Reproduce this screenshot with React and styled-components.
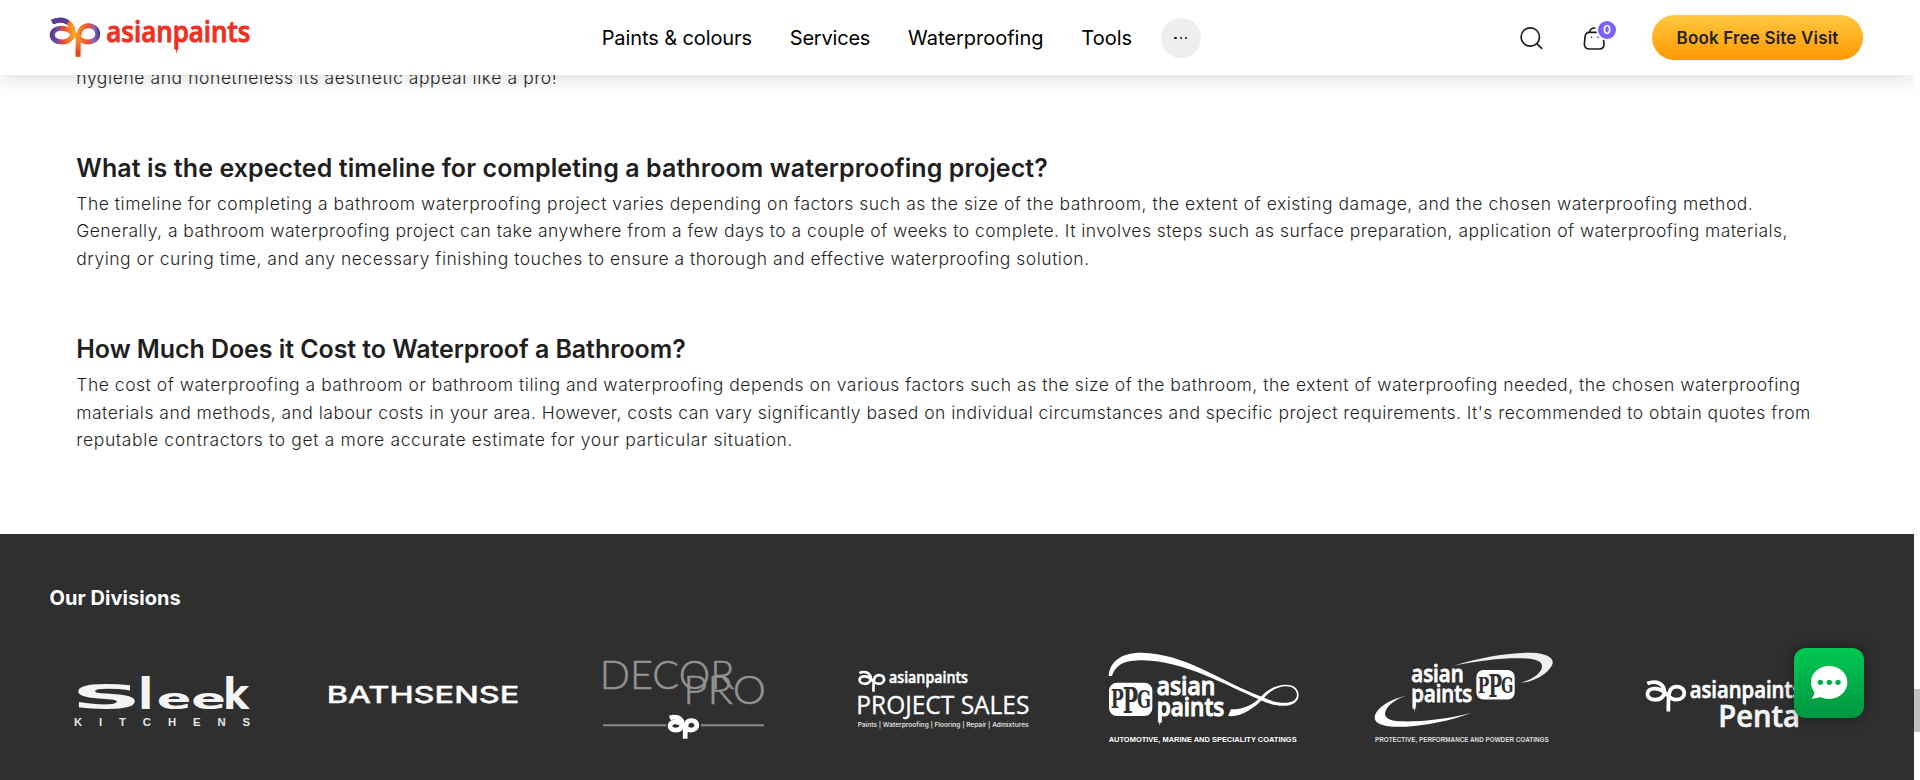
import React from "react";
import styled, { createGlobalStyle } from "styled-components";

const GlobalStyle = createGlobalStyle`
  * { box-sizing: border-box; }
  html, body { margin: 0; padding: 0; overflow: hidden; }
  body {
    background: #fff;
    color: #1f1f1f;
    font-family: Inter, "Liberation Sans", sans-serif;
  }
`;

const Page = styled.div`
  display: flex;
  width: 1920px;
  height: 780px;
  overflow: hidden;
`;

const Content = styled.div`
  display: flex;
  flex-direction: column;
  width: 1914px;
  height: 780px;
  overflow: hidden;
`;

const ScrollTrack = styled.div`
  width: 6px;
  padding-top: 689px;
  background: #fffefa;
`;

const ScrollThumb = styled.div`
  height: 43px;
  background: #c1c1c1;
`;

const Header = styled.header`
  position: relative;
  z-index: 2;
  display: flex;
  flex: none;
  align-items: center;
  height: 75px;
  padding: 0 51px 0 50px;
  background: #fff;
  box-shadow: 0 4px 20px rgba(0, 0, 0, 0.13);
`;

const LogoLink = styled.a`
  display: block;
  height: 75px;
`;

const BrandSvg = styled.svg`
  display: block;
  overflow: visible;
`;

const Nav = styled.nav`
  display: flex;
  align-items: center;
  gap: 37.8px;
  margin-left: 346.7px;
`;

const NavItem = styled.a`
  color: #000;
  font-size: 20px;
  line-height: 28px;
  letter-spacing: ${(p) => p.$tracking || 0}px;
  white-space: nowrap;
`;

const MoreButton = styled.button`
  display: flex;
  align-items: center;
  justify-content: center;
  gap: 3px;
  width: 40px;
  height: 40px;
  margin: 1px 0 0 -9px;
  padding: 0;
  border: 0;
  border-radius: 50%;
  background: #eee;
`;

const Dot = styled.span`
  width: 2.4px;
  height: 2.4px;
  border-radius: 50%;
  background: #111;
`;

const Actions = styled.div`
  display: flex;
  align-items: center;
  margin-left: auto;
`;

const IconButton = styled.button`
  position: relative;
  display: block;
  width: 26px;
  height: 26px;
  margin-right: ${(p) => p.$gap}px;
  margin-top: 2px;
  padding: 0;
  border: 0;
  background: none;
`;

const Badge = styled.span`
  position: absolute;
  top: -5px;
  right: -8px;
  width: 18px;
  height: 18px;
  border-radius: 50%;
  background: #7b61ff;
  color: #fff;
  font: 600 12px/18px Inter, sans-serif;
  text-align: center;
`;

const BookButton = styled.button`
  width: 211px;
  height: 45px;
  padding: 0;
  border: 0;
  border-radius: 23px;
  background: linear-gradient(180deg, #ffc840 0%, #ff9800 100%);
  color: #232323;
  font: 600 17px/24px Inter, sans-serif;
  letter-spacing: 0.17px;
`;

const Article = styled.main`
  display: flex;
  flex: none;
  flex-direction: column;
  gap: 59.3px;
  height: 470.5px;
  margin-top: -11.5px;
  padding-left: 76.3px;
`;

const Section = styled.section`
  display: flex;
  flex-direction: column;
  gap: 4px;
`;

const Question = styled.h2`
  margin: 0;
  padding-top: 0.5px;
  font-size: 25px;
  font-weight: 600;
  line-height: 35px;
  letter-spacing: ${(p) => p.$tracking}px;
`;

const Answer = styled.p`
  margin: 0;
`;

const Line = styled.span`
  display: block;
  font-size: 17.5px;
  font-weight: 300;
  line-height: 27.5px;
  letter-spacing: ${(p) => p.$tracking}px;
  white-space: nowrap;
`;

const Footer = styled.footer`
  flex: 1;
  padding-top: 51.5px;
  background: #2f2f2f;
`;

const FooterTitle = styled.h3`
  margin: 0 0 30.5px 49.5px;
  color: #fff;
  font-size: 20px;
  font-weight: 700;
  line-height: 24px;
  letter-spacing: 0.06px;
`;

const Divisions = styled.div`
  display: grid;
  grid-template-columns: repeat(7, 260.3px);
  justify-items: center;
  padding-left: 31.85px;
`;

const DivisionLogo = styled.svg`
  display: block;
  width: 240px;
  height: 120px;
  overflow: visible;
`;

const ChatButton = styled.button`
  position: fixed;
  z-index: 3;
  left: 1794px;
  top: 648px;
  display: block;
  width: 70px;
  height: 70px;
  padding: 0;
  border: 0;
  border-radius: 12px;
  background: linear-gradient(180deg, #00c853 0%, #00963f 100%);
  box-shadow: 0 0 14px rgba(0, 0, 0, 0.4);
`;

const sections = [
  {
    question: "What is the expected timeline for completing a bathroom waterproofing project?",
    tracking: 0.08,
    lines: [
      ["The timeline for completing a bathroom waterproofing project varies depending on factors such as the size of the bathroom, the extent of existing damage, and the chosen waterproofing method.", 0.52],
      ["Generally, a bathroom waterproofing project can take anywhere from a few days to a couple of weeks to complete. It involves steps such as surface preparation, application of waterproofing materials,", 0.458],
      ["drying or curing time, and any necessary finishing touches to ensure a thorough and effective waterproofing solution.", 0.51],
    ],
  },
  {
    question: "How Much Does it Cost to Waterproof a Bathroom?",
    tracking: -0.07,
    lines: [
      ["The cost of waterproofing a bathroom or bathroom tiling and waterproofing depends on various factors such as the size of the bathroom, the extent of waterproofing needed, the chosen waterproofing", 0.515],
      ["materials and methods, and labour costs in your area. However, costs can vary significantly based on individual circumstances and specific project requirements. It's recommended to obtain quotes from", 0.47],
      ["reputable contractors to get a more accurate estimate for your particular situation.", 0.64],
    ],
  },
];

function Ribbon({ x, y, scale, stroke, width = 13 }) {
  return (
    <g
      transform={`translate(${x} ${y}) scale(${scale})`}
      fill="none"
      stroke={stroke}
      strokeWidth={width}
    >
      <path d="M6 13C28 3 56 6 67 30C76 56 58 73 37 73C14 73 5 60 7 49C11 29 44 26 66 43" />
      <path d="M66 43C82 54 90 73 113 73C134 73 144 60 143 47C141 27 118 20 101 28C86 35 84 55 84 117" />
    </g>
  );
}

function Words({ x, y, w, size, weight = 600, family = "Open Sans", fill = "#fff", outline = 0, children }) {
  return (
    <text
      x={x}
      y={y}
      textLength={w}
      lengthAdjust="spacingAndGlyphs"
      fontFamily={`"${family}", sans-serif`}
      fontSize={size}
      fontWeight={weight}
      fill={fill}
      stroke={fill}
      strokeWidth={outline}
    >
      {children}
    </text>
  );
}

function HeaderLogo() {
  return (
    <BrandSvg width="205" height="75" viewBox="60 0 615 225">
      <defs>
        <linearGradient id="ribbon" gradientUnits="userSpaceOnUse" x1="0" y1="0" x2="150" y2="0">
          <stop offset="0" stopColor="#56388f" />
          <stop offset="0.16" stopColor="#7d4c9a" />
          <stop offset="0.27" stopColor="#ee4b2b" />
          <stop offset="0.48" stopColor="#f9a52a" />
          <stop offset="0.62" stopColor="#f37b2a" />
          <stop offset="0.78" stopColor="#ee4b3b" />
          <stop offset="0.88" stopColor="#8c6bb5" />
          <stop offset="1" stopColor="#4b2f8a" />
        </linearGradient>
        <linearGradient id="stem" gradientUnits="userSpaceOnUse" x1="0" y1="100" x2="0" y2="170">
          <stop offset="0" stopColor="#f9a52a" stopOpacity="0" />
          <stop offset="0.8" stopColor="#ee4023" />
        </linearGradient>
      </defs>
      <Ribbon x={60} y={53} scale={1} stroke="url(#ribbon)" width={15} />
      <path d="M67 66C84 58 102 58 114 68" fill="none" stroke="#5b3c94" strokeWidth="15" />
      <rect x="137" y="100" width="14" height="70" fill="url(#stem)" />
      <Words x={229} y={125} w={432} size={88} outline={3} fill="#ee3124">asianpaints</Words>
      <path d="M433 122H445L440 163Z" fill="#ee3124" />
    </BrandSvg>
  );
}

function PpgBadge({ x, y, scale }) {
  return (
    <g transform={`translate(${x} ${y}) scale(${scale})`}>
      <rect width="130" height="100" rx="24" fill="#fff" />
      <text y="76" fontFamily='"DejaVu Serif", serif' fontWeight="700" fill="#2f2f2f">
        <tspan x="5" y="77" fontSize="76" textLength="39" lengthAdjust="spacingAndGlyphs">P</tspan>
        <tspan x="41" y="90" fontSize="108" textLength="46" lengthAdjust="spacingAndGlyphs">P</tspan>
        <tspan x="84" y="77" fontSize="74" textLength="42" lengthAdjust="spacingAndGlyphs">G</tspan>
      </text>
    </g>
  );
}

function Sleek() {
  return (
    <DivisionLogo viewBox="6 210 720 360">
      <text y="416" fill="#f4f4f4" fontFamily='"DejaVu Sans", sans-serif' fontWeight="700">
        <tspan x="94" fontSize="100" textLength="212" lengthAdjust="spacingAndGlyphs">S</tspan>
        <tspan x="294" fontSize="130" textLength="46" lengthAdjust="spacingAndGlyphs">l</tspan>
        <tspan x="350" fontSize="86" textLength="208" lengthAdjust="spacingAndGlyphs">ee</tspan>
        <tspan x="549" fontSize="130" textLength="78" lengthAdjust="spacingAndGlyphs">k</tspan>
      </text>
      <text x="102" y="468" fontFamily='"Liberation Sans", sans-serif' fontWeight="700" fontSize="34" textLength="528" fill="#e6e6e6">
        KITCHENS
      </text>
    </DivisionLogo>
  );
}

function Bathsense() {
  return (
    <DivisionLogo viewBox="787 210 720 360">
      <Words x={861} y={398} w={578} size={69} weight={500} family="Inter" outline={1}>BATHSENSE</Words>
    </DivisionLogo>
  );
}

function DecorPro() {
  return (
    <DivisionLogo viewBox="-52 30 720 360">
      <Words x={58} y={176} w={404} size={118} weight={300} family="Lato" fill="#939393" outline={1.5}>DECOR</Words>
      <Words x={309} y={221} w={248} size={118} weight={300} family="Lato" fill="#939393" outline={1.5}>PRO</Words>
      <path d="M68 286H258M362 286H551" stroke="#8a8a8a" strokeWidth="6" />
      <Ribbon x={265} y={257} scale={0.59} stroke="#fff" width={24} />
    </DivisionLogo>
  );
}

function ProjectSales() {
  return (
    <DivisionLogo viewBox="729 30 720 360">
      <Ribbon x={835} y={122} scale={0.54} stroke="#fff" width={15} />
      <Words x={927} y={158} w={237} size={47} outline={1.5}>asianpaints</Words>
      <path d="M1039 156H1046L1043 178Z" fill="#fff" />
      <Words x={829} y={252} w={519} size={77} weight={400} outline={1}>PROJECT SALES</Words>
      <Words x={833} y={292} w={513} size={19} weight={600} family="Inter" fill="#ddd">
        Paints | Waterproofing | Flooring | Repair | Admixtures
      </Words>
    </DivisionLogo>
  );
}

function Automotive() {
  return (
    <DivisionLogo viewBox="-20 30 720 360">
      <path
        d="M57 138C60 98 90 68 155 68C285 70 385 150 520 202C570 226 620 224 622 195C621 160 562 158 525 202C490 238 455 262 415 258L424 238C466 238 492 222 514 200C545 160 624 148 627 194C627 234 566 236 512 210C405 164 285 94 160 91C105 91 80 102 67 138Z"
        fill="#fff"
      />
      <PpgBadge x={58} y={158} scale={1} />
      <Words x={201} y={195} w={176} size={77} outline={3}>asian</Words>
      <Words x={201} y={257} w={203} size={77} outline={3}>paints</Words>
      <path d="M206 255H217L210 287Z" fill="#fff" />
      <Words x={57} y={335} w={564} size={19} weight={700} family="Liberation Sans">
        AUTOMOTIVE, MARINE AND SPECIALITY COATINGS
      </Words>
    </DivisionLogo>
  );
}

function Protective() {
  return (
    <DivisionLogo viewBox="-20 30 720 360">
      <path
        d="M312 107C390 82 480 68 545 68C605 70 622 92 600 116C582 138 550 155 512 159C560 144 586 119 574 99C556 77 440 80 312 107Z"
        fill="#eee"
      />
      <path
        d="M168 198C112 210 75 240 75 264C78 290 130 292 170 290C230 287 310 270 364 249C290 268 210 276 152 274C104 271 98 254 115 230C125 218 145 205 168 198Z"
        fill="#fff"
      />
      <Words x={185} y={157} w={157} size={71} outline={2.5}>asian</Words>
      <Words x={185} y={217} w={182} size={71} outline={2.5}>paints</Words>
      <path d="M189 214H199L194 246Z" fill="#fff" />
      <PpgBadge x={380} y={120} scale={0.885} />
      <Words x={76} y={335} w={521} size={19} weight={700} family="Liberation Sans" fill="#dcdcdc">
        PROTECTIVE, PERFORMANCE AND POWDER COATINGS
      </Words>
    </DivisionLogo>
  );
}

function Penta() {
  return (
    <DivisionLogo viewBox="-49 30 720 360">
      <Ribbon x={76} y={150} scale={0.81} stroke="#fff" width={14} />
      <Words x={208} y={204} w={338} size={70} outline={2}>asianpaints</Words>
      <path d="M370 202H378L374 230Z" fill="#fff" />
      <Words x={294} y={292} w={245} size={94} outline={2} fill="#f4f4f4">Penta</Words>
    </DivisionLogo>
  );
}

export default function App() {
  return (
    <>
      <GlobalStyle />
      <Page>
        <Content>
          <Header>
            <LogoLink>
              <HeaderLogo />
            </LogoLink>
            <Nav>
              <NavItem $tracking={-0.1}>Paints &amp; colours</NavItem>
              <NavItem $tracking={-0.2}>Services</NavItem>
              <NavItem>Waterproofing</NavItem>
              <NavItem>Tools</NavItem>
              <MoreButton aria-label="More">
                <Dot />
                <Dot />
                <Dot />
              </MoreButton>
            </Nav>
            <Actions>
              <IconButton $gap={37} aria-label="Search">
                <svg width="26" height="26" viewBox="0 0 26 26" fill="none" stroke="#1c1c1c" strokeWidth="1.7" strokeLinecap="round">
                  <circle cx="11.3" cy="11" r="9.2" />
                  <path d="M18 17.8L22.7 22.4" />
                </svg>
              </IconButton>
              <IconButton $gap={44} aria-label="Cart">
                <svg width="26" height="26" viewBox="0 0 26 26" fill="none" stroke="#1c1c1c" strokeWidth="1.7" strokeLinecap="round">
                  <path d="M14 6.3H7.2C4.2 6.3 3.4 8 3.1 10.5L2.4 17.5C2.1 21 4 23 7 23H17.5C20.5 23 22.3 21 22 17.8L21.6 14.5" />
                  <path d="M7.6 6C8 3.6 9.7 2 12.7 2" />
                  <path d="M9.3 11.1H9.8M15.7 11.1H16.2" strokeWidth="1.3" />
                </svg>
                <Badge>0</Badge>
              </IconButton>
              <BookButton>Book Free Site Visit</BookButton>
            </Actions>
          </Header>

          <Article>
            <Answer>
              <Line $tracking={0.58}>hygiene and nonetheless its aesthetic appeal like a pro!</Line>
            </Answer>
            {sections.map((s) => (
              <Section key={s.question}>
                <Question $tracking={s.tracking}>{s.question}</Question>
                <Answer>
                  {s.lines.map(([text, tracking]) => (
                    <Line key={text} $tracking={tracking}>{text}</Line>
                  ))}
                </Answer>
              </Section>
            ))}
          </Article>

          <Footer>
            <FooterTitle>Our Divisions</FooterTitle>
            <Divisions>
              <Sleek />
              <Bathsense />
              <DecorPro />
              <ProjectSales />
              <Automotive />
              <Protective />
              <Penta />
            </Divisions>
          </Footer>
        </Content>
        <ScrollTrack>
          <ScrollThumb />
        </ScrollTrack>
      </Page>
      <ChatButton aria-label="Chat">
        <svg width="70" height="70" viewBox="0 0 210 210">
          <path
            d="M105 54C136 54 160 75 160 103C160 131 136 153 105 153C95 153 86 151 78 147C70 151 61 152 52 152C58 146 61 139 61 132C54 124 51 114 51 103C51 75 75 54 105 54Z"
            fill="#fff"
          />
          <g fill="#00b04a">
            <circle cx="79" cy="103" r="8" />
            <circle cx="106" cy="103" r="8" />
            <circle cx="132" cy="103" r="8" />
          </g>
        </svg>
      </ChatButton>
    </>
  );
}
